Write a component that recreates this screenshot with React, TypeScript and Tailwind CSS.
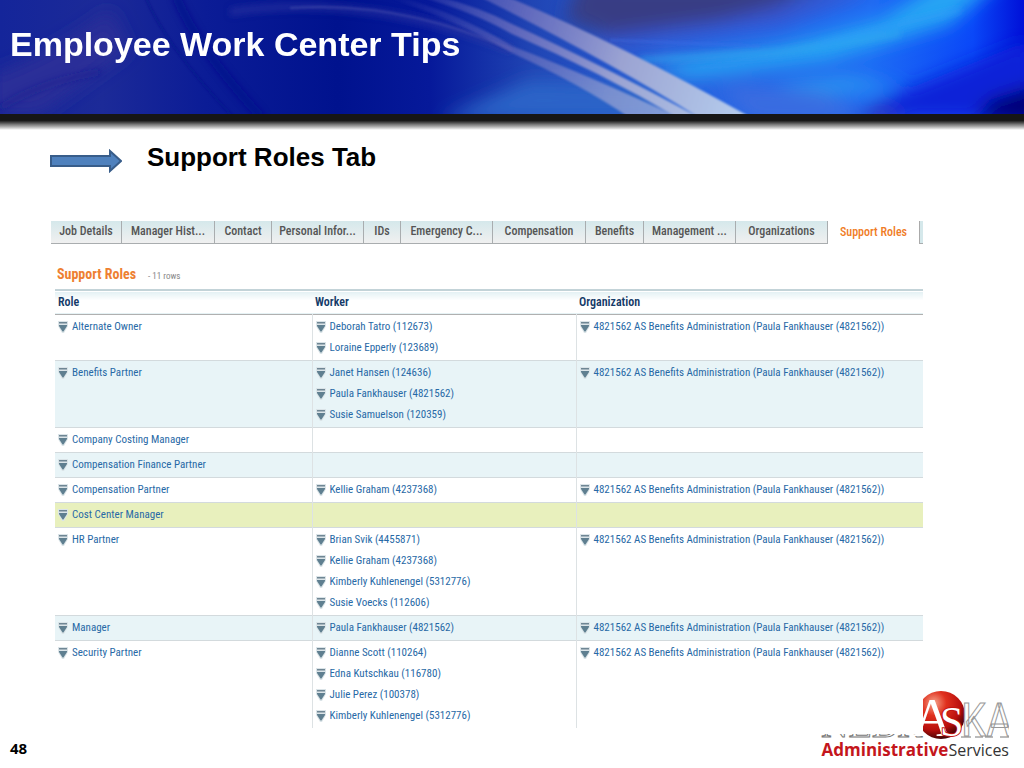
const tabs = ["Job Details", "Manager Hist...", "Contact", "Personal Infor...", "IDs", "Emergency C...", "Compensation", "Benefits", "Management ...", "Organizations"];

const org = "4821562 AS Benefits Administration (Paula Fankhauser (4821562))";

const rows: { role: string; workers: string[]; org?: string; bg: string }[] = [
  { role: "Alternate Owner", workers: ["Deborah Tatro (112673)", "Loraine Epperly (123689)"], org, bg: "bg-white" },
  {
    role: "Benefits Partner",
    workers: ["Janet Hansen (124636)", "Paula Fankhauser (4821562)", "Susie Samuelson (120359)"],
    org,
    bg: "bg-[#e8f4f7]",
  },
  { role: "Company Costing Manager", workers: [], bg: "bg-white" },
  { role: "Compensation Finance Partner", workers: [], bg: "bg-[#e8f4f7]" },
  { role: "Compensation Partner", workers: ["Kellie Graham (4237368)"], org, bg: "bg-white" },
  { role: "Cost Center Manager", workers: [], bg: "bg-[#e8f0bd]" },
  {
    role: "HR Partner",
    workers: ["Brian Svik (4455871)", "Kellie Graham (4237368)", "Kimberly Kuhlenengel (5312776)", "Susie Voecks (112606)"],
    org,
    bg: "bg-white",
  },
  { role: "Manager", workers: ["Paula Fankhauser (4821562)"], org, bg: "bg-[#e8f4f7]" },
  {
    role: "Security Partner",
    workers: ["Dianne Scott (110264)", "Edna Kutschkau (116780)", "Julie Perez (100378)", "Kimberly Kuhlenengel (5312776)"],
    org,
    bg: "bg-white",
  },
];

function Banner() {
  return (
    <svg viewBox="0 0 1024 114" preserveAspectRatio="none" className="absolute inset-0 h-full w-full" aria-hidden="true">
      <defs>
        <linearGradient id="base">
          <stop offset="0" stopColor="#14259a" />
          <stop offset="0.1" stopColor="#1c2a98" />
          <stop offset="0.2" stopColor="#0b1c96" />
          <stop offset="0.33" stopColor="#00128e" />
          <stop offset="0.42" stopColor="#06199a" />
          <stop offset="0.52" stopColor="#2045b4" />
          <stop offset="0.65" stopColor="#2a62dc" />
          <stop offset="0.85" stopColor="#1e6cf4" />
          <stop offset="0.95" stopColor="#0a48f8" />
          <stop offset="1" stopColor="#0010d8" />
        </linearGradient>
        <linearGradient id="ray" gradientUnits="userSpaceOnUse" x1="390" y1="0" x2="740" y2="114">
          <stop offset="0" stopColor="#6c6cc0" stopOpacity="0" />
          <stop offset="0.35" stopColor="#7474c0" stopOpacity="0.75" />
          <stop offset="0.65" stopColor="#9ba3d2" />
          <stop offset="1" stopColor="#b4cbec" />
        </linearGradient>
        <filter id="b1" x="-10%" y="-10%" width="120%" height="120%"><feGaussianBlur stdDeviation="1.200" /></filter>
        <filter id="b2" x="-10%" y="-10%" width="120%" height="120%"><feGaussianBlur stdDeviation="3" /></filter>
        <filter id="b8" x="-20%" y="-50%" width="140%" height="200%"><feGaussianBlur stdDeviation="9" /></filter>
      </defs>
      <rect width="1024" height="114" fill="url(#base)" />
      <g filter="url(#b8)">
        <path d="M-10 75 Q60 50 110 10 L130 50 L40 114 L-10 114z" fill="#2b2f98" />
        <path d="M580 -20 L840 -20 L740 20 L620 40 L565 20z" fill="#393c84" />
        <path d="M600 46 L780 24 L880 -10 L840 -10 L720 20 L600 36z" fill="#3852cc" />
        <path d="M440 120 L530 80 L640 85 L690 120z" fill="#2a63c8" />
        <path d="M650 66 L780 46 L880 20 L940 -20 L1000 -20 L950 24 L830 60 L690 78z" fill="#28a4f4" />
        <path d="M770 84 L850 76 L900 88 L830 94z" fill="#2c94f0" />
        <path d="M720 84 L820 92 L880 120 L750 120z" fill="#3a6ce0" />
        <path d="M850 118 L900 92 L950 72 L1030 40 L1030 118z" fill="#0a20d8" />
        <path d="M850 120 L880 106 L910 120z" fill="#3030b0" />
        <path d="M975 120 L990 100 L1040 84 L1040 120z" fill="#000070" />
      </g>
      <g filter="url(#b2)" fill="none">
        <path d="M176 -4 Q195 45 262 118" stroke="#06128c" strokeWidth="8" opacity="0.8" />
        <path d="M0 108 Q40 82 100 72" stroke="#17208e" strokeWidth="4" opacity="0.7" />
        <path d="M230 12 Q370 -8 512 50" stroke="#3039a4" strokeWidth="8" opacity="0.5" />
        <path d="M640 60 L780 52 L900 34" stroke="#34a8ee" strokeWidth="6" opacity="0.6" />
        <path d="M820 44 L960 10" stroke="#2c9cf8" strokeWidth="5" opacity="0.7" />
      </g>
      <g filter="url(#b1)" fill="none">
        <path d="M145 -4 Q165 45 234 118" stroke="#09158a" strokeWidth="2" opacity="0.6" />
        <path d="M290 8 Q400 0 512 50" stroke="#4a50ae" strokeWidth="2" opacity="0.6" />
        <path d="M610 40 L760 46" stroke="#3f72ea" strokeWidth="3" opacity="0.3" />
      </g>
      <g filter="url(#b1)" fill="url(#ray)">
        <path d="M470 -16 L515 0 Q620 44 752 118 L700 118 Q600 56 470 -8z" />
        <path d="M410 -10 Q470 2 512 24 Q600 64 700 118 L678 118 Q600 72 512 34 Q470 10 410 -6z" />
        <path d="M380 -8 Q450 8 512 46 Q590 76 680 118 L630 118 Q580 84 512 53 Q450 16 380 -4z" opacity="0.7" />
      </g>
    </svg>
  );
}

function Marker() {
  return (
    <svg viewBox="0 0 10 12" className="mt-[4px] h-3 w-[10px] shrink-0" aria-hidden="true">
      <path d="M0 0h10v5L6 12H4L0 5z" fill="#dbe4e8" />
      <path d="M1 1h8v1.500H1z" fill="#6f8694" />
      <path d="M1 4h8v1L5.500 10.500h-1L1 5z" fill="#5f7f90" />
    </svg>
  );
}

function Item({ text }: { text: string }) {
  return (
    <a href="#" className="flex gap-1 leading-5 whitespace-nowrap text-[#2769a6]">
      <Marker />
      {text}
    </a>
  );
}

function Logo() {
  return (
    <div className="absolute right-[15px] bottom-2 flex flex-col items-end">
      <svg viewBox="0 0 188 50" className="h-[50px] w-[188px]" role="img" aria-label="Nebraska">
        <defs>
          <radialGradient id="ball" cx="0.35" cy="0.25" r="0.75">
            <stop offset="0" stopColor="#f6a58c" />
            <stop offset="0.35" stopColor="#e0301e" />
            <stop offset="0.75" stopColor="#b80f0d" />
            <stop offset="1" stopColor="#4a0505" />
          </radialGradient>
        </defs>
        <text x="0" y="47" fontFamily="Liberation Serif, serif" fontSize="38" fill="#fff" stroke="#777" strokeWidth="1">NEBR</text>
        <circle cx="120" cy="25" r="24" fill="url(#ball)" />
        <text x="140" y="46" fontFamily="Roboto Condensed, sans-serif" fontSize="46" fontWeight="400" fill="#fff" stroke="#999" strokeWidth="1">KA</text>
        <path d="M140 47h10M154 47h8M164 47h8M179 47h9" stroke="#777" />
        <g fontFamily="Liberation Serif, serif" fill="#fff">
          <text x="92" y="46" fontSize="54">A</text>
          <text x="119" y="46" fontSize="42" stroke="#c01510" strokeWidth="2" paintOrder="stroke">S</text>
        </g>
      </svg>
      <p className="font-['Open_Sans',sans-serif] text-base leading-5 text-[#333]">
        <b className="text-[17px] text-[#c4161c]">Administrative</b>Services
      </p>
    </div>
  );
}

export default function App() {
  return (
    <div className="relative flex min-h-screen flex-col overflow-hidden bg-white font-['Liberation_Sans',Arial,sans-serif]">
      <Logo />
      <header className="relative h-[114px]">
        <Banner />
        <h1 className="relative px-[10px] pt-6 text-[34px] leading-10 font-bold text-white">Employee Work Center Tips</h1>
      </header>
      <div className="h-4 bg-linear-to-b from-[#161616] from-40% via-[#777] via-65% to-white" />

      <div className="flex items-center gap-[25px] pt-[11px] pl-[50px]">
        <svg viewBox="0 0 72 24" className="mt-2 h-6 w-[72px]" aria-hidden="true">
          <path d="M1 7h59V2l11 10-11 10v-5H1z" fill="#4f81bd" stroke="#385d8a" strokeWidth="2" />
        </svg>
        <h2 className="text-[26px] leading-8 font-bold text-black">Support Roles Tab</h2>
      </div>

      <main className="relative mt-12 mr-[101px] ml-[51px] bg-white pb-[6px] font-['Roboto_Condensed','Liberation_Sans',sans-serif] text-[11px]">
        <nav className="grid grid-cols-[71fr_93fr_57fr_92fr_37fr_92fr_93fr_58fr_92fr_92fr_92fr_3fr] text-xs font-medium text-[#555]">
          {tabs.map((tab) => (
            <button
              key={tab}
              type="button"
              className="h-[23px] border-r border-b border-[#a9adaf] bg-linear-to-b from-[#d5e8eb] to-[#f0f0f0] pb-[3px] whitespace-nowrap"
            >
              {tab}
            </button>
          ))}
          <button type="button" className="border-r border-[#aaa] pb-[2px] whitespace-nowrap text-[#f07c26]">Support Roles</button>
          <span className="border-b border-[#a9adaf] bg-[#d5e8eb]" />
        </nav>

        <div className="flex items-baseline gap-3 pt-5 pl-[6px] leading-5">
          <h3 className="text-sm font-bold text-[#ee7f31]">Support Roles</h3>
          <span className="text-[9px] text-[#888]">- 11 rows</span>
        </div>

        <div className="mt-[3px] ml-1">
          <table className="w-full table-fixed border-collapse text-left">
            <colgroup>
              <col className="w-[257px]" />
              <col className="w-[264px]" />
              <col />
            </colgroup>
            <thead>
              <tr className="h-6 border-t-2 border-b border-t-[#c3d3d8] border-b-[#b0b0b0] bg-linear-to-b from-[#e4f1f4] to-white to-40% text-xs leading-4 text-[#143a68]">
                <th className="px-[3px] font-semibold">Role</th>
                <th className="px-[3px] font-semibold">Worker</th>
                <th className="px-[3px] font-semibold">Organization</th>
              </tr>
            </thead>
            <tbody>
              {rows.map((row) => (
                <tr key={row.role} className={`border-b border-[#d3dadd] align-top last:border-b-0 ${row.bg}`}>
                  <td className="px-[3px] pt-[2px] pb-[2px]">
                    <Item text={row.role} />
                  </td>
                  <td className="border-l border-[#dde2e4] px-[3px] pt-[2px] pb-[2px]">
                    <div className="flex flex-col gap-px">
                      {row.workers.map((w) => (
                        <Item key={w} text={w} />
                      ))}
                    </div>
                  </td>
                  <td className="border-l border-[#dde2e4] px-[3px] pt-[2px] pb-[2px]">{row.org && <Item text={row.org} />}</td>
                </tr>
              ))}
            </tbody>
          </table>
        </div>
      </main>

      <footer className="absolute bottom-[10px] left-[10px] font-['Open_Sans',sans-serif] text-[15px] leading-5 font-bold text-black">48</footer>
    </div>
  );
}
